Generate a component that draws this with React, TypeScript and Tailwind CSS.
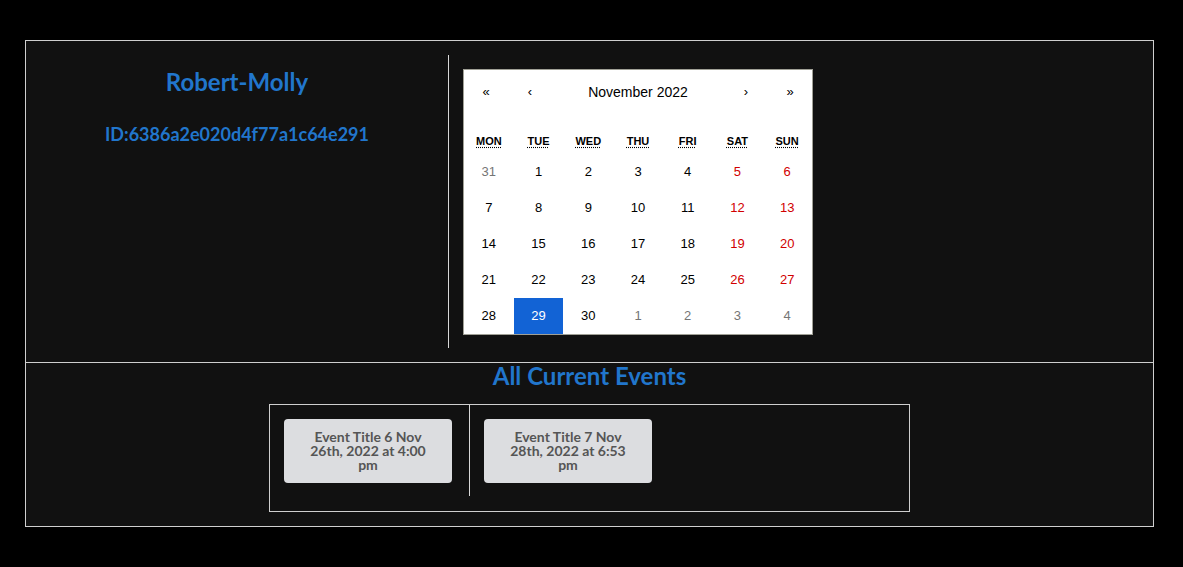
import React from "react"

type Tile = { day: number; kind: "cur" | "weekend" | "other" | "active" }

const weekdays = ["MON", "TUE", "WED", "THU", "FRI", "SAT", "SUN"]

const buildMonth = (): Tile[] => {
  const tiles: Tile[] = [{ day: 31, kind: "other" }]
  for (let d = 1; d <= 30; d++) {
    const col = tiles.length % 7
    let kind: Tile["kind"] = col >= 5 ? "weekend" : "cur"
    if (d === 29) kind = "active"
    tiles.push({ day: d, kind })
  }
  for (let d = 1; d <= 4; d++) tiles.push({ day: d, kind: "other" })
  return tiles
}

const tileClass: Record<Tile["kind"], string> = {
  cur: "text-black",
  weekend: "text-[#d10000]",
  other: "text-[#757575]",
  active: "bg-[#1263d5] text-white",
}

const Calendar = () => {
  const tiles = buildMonth()
  return (
    <div className="w-[350px] border border-[#a0a096] bg-white font-['Liberation_Sans',Arial,sans-serif]">
      {/* NAV */}
      <div className="flex h-[44px] mb-[14px] items-center text-black">
        <button className="w-[44px] h-full text-[13px]">«</button>
        <button className="w-[44px] h-full text-[13px]">‹</button>
        <span className="flex-1 text-center text-[14px]">November 2022</span>
        <button className="w-[44px] h-full text-[13px]">›</button>
        <button className="w-[44px] h-full text-[13px]">»</button>
      </div>

      {/* WEEKDAYS */}
      <div className="grid grid-cols-7 h-[26px] items-center">
        {weekdays.map((w) => (
          <div key={w} className="text-center text-[11px] font-bold">
            <abbr className="underline decoration-dotted underline-offset-2">{w}</abbr>
          </div>
        ))}
      </div>

      {/* DAYS */}
      <div className="grid grid-cols-7">
        {tiles.map((t, idx) => (
          <div
            key={idx}
            className={`h-[36px] flex items-center justify-center text-[13px] ${tileClass[t.kind]}`}
          >
            {t.day}
          </div>
        ))}
      </div>
    </div>
  )
}

const events = [
  { title: "Event Title 6 Nov 26th, 2022 at 4:00 pm", border: true },
  { title: "Event Title 7 Nov 28th, 2022 at 6:53 pm", border: false },
]

const App = () => {
  return (
    <div className="min-h-screen bg-black pt-[40px] font-['Lato',sans-serif]">
      <div className="ml-[25px] w-[1129px] border border-[#cfcfcf] bg-[#111111]">

        {/* TOP */}
        <div className="flex pt-[14px] pb-[14px] border-b border-[#cfcfcf]">
          <div className="w-[423px] border-r border-[#d8d8d8] flex flex-col items-center pt-[12px]">
            <h1 className="text-[24px] leading-[29px] font-bold text-[#2176cc]">Robert-Molly</h1>
            <p className="mt-[27px] text-[18px] leading-[22px] font-bold text-[#2176cc]">
              ID:6386a2e020d4f77a1c64e291
            </p>
          </div>
          <div className="pl-[14px] pt-[14px] pb-[13px]">
            <Calendar />
          </div>
        </div>

        {/* EVENTS */}
        <div className="flex flex-col items-center pb-[14px]">
          <h2 className="text-[24px] leading-[26px] font-bold text-[#2176cc]">All Current Events</h2>
          <div className="mt-[15px] w-[641px] border border-[#cfcfcf] flex pb-[15px]">
            {events.map((ev, idx) => (
              <div
                key={idx}
                className={`w-[200px] pl-[14px] pt-[14px] pb-[13px] ${ev.border ? "border-r border-[#d8d8d8]" : ""}`}
              >
                <div className="w-[168px] h-[64px] rounded-[4px] bg-[#dcdde0] flex items-center justify-center px-[20px]">
                  <p className="text-center text-[14px] leading-[14px] font-bold text-[#555555]">
                    {ev.title}
                  </p>
                </div>
              </div>
            ))}
          </div>
        </div>
      </div>
    </div>
  )
}

export default App
